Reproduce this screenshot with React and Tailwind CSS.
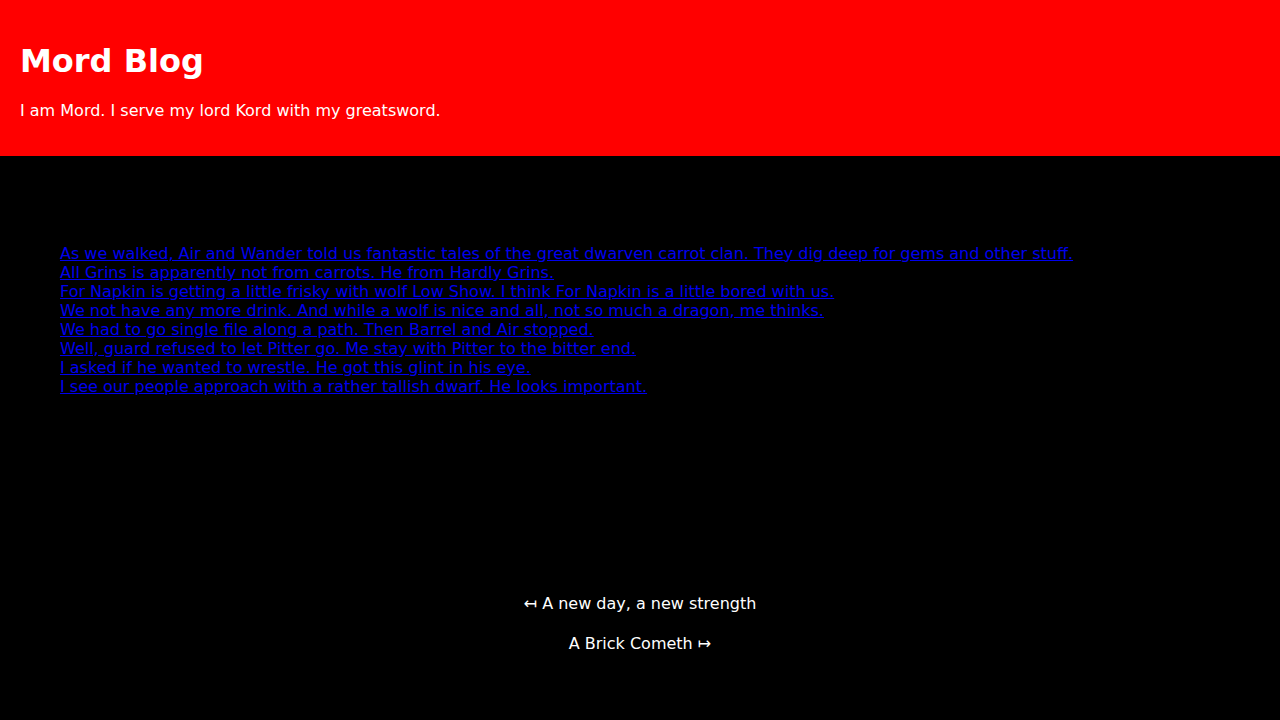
export default function App() {
  const posts = [
    "As we walked, Air and Wander told us fantastic tales of the great dwarven carrot clan. They dig deep for gems and other stuff.",
    "All Grins is apparently not from carrots. He from Hardly Grins.",
    "For Napkin is getting a little frisky with wolf Low Show. I think For Napkin is a little bored with us.",
    "We not have any more drink. And while a wolf is nice and all, not so much a dragon, me thinks.",
    "We had to go single file along a path. Then Barrel and Air stopped.",
    "Well, guard refused to let Pitter go. Me stay with Pitter to the bitter end.",
    "I asked if he wanted to wrestle. He got this glint in his eye.",
    "I see our people approach with a rather tallish dwarf. He looks important.",
  ];
  return (
    <div
      className="min-h-[720px] bg-black flex flex-col"
      style={{ fontFamily: '"DejaVu Sans", sans-serif' }}
    >
      <header className="h-[156px] bg-[#ff0000] px-5 pt-[43px] text-white">
        <h1 className="text-[32px] leading-[37px] font-bold">Mord Blog</h1>
        <p className="mt-[21px] text-base leading-[19px]">
          I am Mord. I serve my lord Kord with my greatsword.
        </p>
      </header>
      <main className="px-[60px] pt-[88px] flex flex-col">
        {posts.map((p) => (
          <div key={p} className="text-base leading-[19px]">
            <a href="#" className="text-[#0000ee] underline">
              {p}
            </a>
          </div>
        ))}
      </main>
      <nav className="mt-[198px] flex flex-col items-center gap-[21px] text-white text-base leading-[19px]">
        <a href="#">↤ A new day, a new strength</a>
        <a href="#">A Brick Cometh ↦</a>
      </nav>
    </div>
  );
}
